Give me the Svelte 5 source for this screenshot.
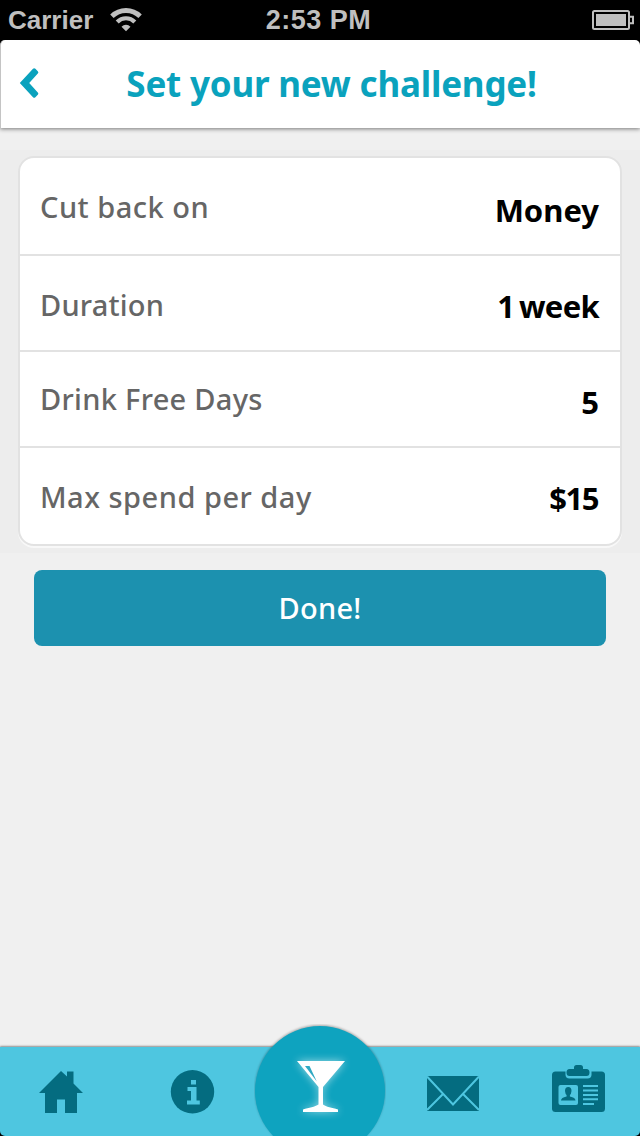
<script lang="ts">
  /** Challenge setup screen: a settings card, a confirm button and the tab bar. */
  type Row = { id: string; label: string; value: string };

  const rows: Row[] = [
    { id: 'goal', label: 'Cut back on', value: 'Money' },
    { id: 'duration', label: 'Duration', value: '1 week' },
    { id: 'free', label: 'Drink Free Days', value: '5' },
    { id: 'spend', label: 'Max spend per day', value: '$15' },
  ];
</script>

<div class="screen">
  <div class="status">
    <div class="carrier">
      <span>Carrier</span>
      <svg width="32" height="24" viewBox="0 0 32 24" fill="none" stroke="#bfbfbf">
        <path d="M1.900 8.300a20 20 0 0 1 28.200 0" stroke-width="4.800" />
        <path d="M7.200 13.900a12.400 12.400 0 0 1 17.600 0" stroke-width="4.200" />
        <path d="M16 23.200l-4.500-4.500a6.400 6.400 0 0 1 9 0z" fill="#bfbfbf" stroke="none" />
      </svg>
    </div>
    <span class="time">2:53 PM</span>
    <svg class="battery" width="42" height="20" viewBox="0 0 42 20">
      <rect x="1" y="1" width="36" height="18" rx="1.5" fill="none" stroke="#bfbfbf" stroke-width="2" />
      <rect x="4" y="4" width="30" height="12" fill="#bfbfbf" />
      <path d="M38 6.800h3v6.400h-3" fill="none" stroke="#bfbfbf" stroke-width="2" />
    </svg>
  </div>

  <header>
    <button class="back" aria-label="Back">
      <svg width="22" height="32" viewBox="0 0 22 32">
        <path d="M14 1.800q1.200-1.200 2.400 0l2.400 2.400q1.200 1.200 0 2.400L10.200 16l8.600 9.400q1.200 1.200 0 2.400l-2.400 2.400q-1.200 1.200-2.400 0L.8 16z" fill="#0aa2bd" />
      </svg>
    </button>
    <h1>Set your new challenge!</h1>
  </header>

  <main>
    <section>
      <div class="card">
        {#each rows as r (r.id)}
          <div class="row {r.id}">
            <span class="label">{r.label}</span>
            <span class="value">{r.value}</span>
          </div>
        {/each}
      </div>
    </section>
    <button class="done"><span>Done!</span></button>
  </main>

  <nav>
    <button aria-label="Home">
      <svg viewBox="0 0 128 89">
        <path d="M61 24l6 5.500V24.500h6.500v12L83 46h-6v20H65V52.500h-8V66H45V46h-6z" />
      </svg>
    </button>
    <button aria-label="Info">
      <svg viewBox="0 0 128 89">
        <circle cx="64.500" cy="44.800" r="21.700" />
        <path class="cut" d="M63 33h5v4.500h-5zM59.500 40h9v13.500h3.300V57.500H59v-4h4V44h-3.500z" />
      </svg>
    </button>
    <button class="drink" aria-label="Challenge">
      <svg viewBox="0 0 132 112">
        <circle cx="66" cy="67" r="65" fill="#0ea3bf" />
        <g class="glow">
          <path fill="#fff" d="M43 37h48L69 63v17.500c3 2.500 9 3 15 5V88H49v-2.500c6-2 12-2.500 15.500-5V63z" />
          <path fill="#2fa9c3" d="M51 42h4.500l7.300 15.500z" />
        </g>
      </svg>
    </button>
    <button aria-label="Messages">
      <svg viewBox="0 0 128 89">
        <rect x="43" y="29" width="52" height="35" />
        <path d="M43 29.500L69 57.500l26-28M43 63l15.500-15.500M95 63L79.500 47.500" fill="none" stroke="#4ec6e0" stroke-width="2" />
      </svg>
    </button>
    <button aria-label="Profile">
      <svg viewBox="0 0 128 89">
        <rect x="40" y="24.500" width="53" height="40.500" rx="3.500" />
        <rect class="cut" x="53.500" y="20" width="26" height="11.500" rx="4" />
        <path d="M57.500 22h4.500v-1.500q0-2.500 2.500-2.500h4q2.500 0 2.500 2.500V22h3.500q3 0 3 3.500t-3 3.500h-17q-3 0-3-3.500t3-3.500z" />
        <rect class="cut" x="46.500" y="38" width="19.500" height="20" rx="2" />
        <path d="M56.300 40q3.200 0 3.200 4-.3 3-1.600 4v1.500q5.600 1 5.600 4H49q0-3 5.600-4V48q-1.300-1-1.600-4 0-4 3.300-4z" />
        <path class="cut" d="M71 38h15v2H71zM71 42.500h15v2H71zM71 47h15v2H71zM71 51.300h15v2H71zM71 56h11v2H71z" />
      </svg>
    </button>
  </nav>
</div>

<style>
  :global(body) { background: #000; }
  .screen {
    width: 640px; height: 1136px;
    display: flex; flex-direction: column;
    overflow: hidden; background: #000;
    font-family: "Noto Sans", sans-serif;
  }
  button { padding: 0; border: 0; background: none; font: inherit; }
  svg { display: block; }

  .status {
    flex: none; height: 40px; box-sizing: border-box; padding: 0 6px 1px 8px;
    display: grid; grid-template-columns: 1fr auto 1fr; align-items: center;
    color: #bfbfbf; font: bold 26px "Liberation Sans", sans-serif;
  }
  .carrier { display: flex; align-items: center; gap: 17px; padding-top: 1px; }
  .time { font-size: 27px; letter-spacing: .5px; padding: 1px 5px 0 0; }
  .battery { justify-self: end; }

  header {
    flex: none; height: 88px; box-sizing: border-box;
    display: flex; align-items: center;
    background: #fff; border-left: 1px solid #c4c4c4;
    border-radius: 5px 5px 0 0;
    box-shadow: 0 1px 4px rgba(0, 0, 0, .5);
    z-index: 1;
  }
  .back { flex: none; width: 60px; padding: 0 0 2px 18px; }
  h1 {
    margin: 0; padding-right: 38px; flex: 1; text-align: center;
    color: #0aa2bd; font-size: 35px; font-weight: 700; line-height: 88px;
    letter-spacing: -.2px; white-space: nowrap;
  }

  main { flex: 1; background: #f0f0f0; padding-top: 22px; }
  section { background: #ededed; padding: 6px 18px 7px; }
  .card {
    background: #fff; border: 2px solid #e2e2e2; border-radius: 16px;
    box-shadow: 0 2px 0 #f8f8f8;
  }
  .row {
    height: 96px; box-sizing: border-box; padding: 0 21px 0 20px;
    display: flex; justify-content: space-between; align-items: flex-start;
    line-height: 96px; border-bottom: 2px solid #e2e2e2;
  }
  .row:first-child { height: 98px; }
  .row:last-child { border-bottom: 0; }
  .label { color: #666; font-size: 29px; font-weight: 500; letter-spacing: .5px; padding-top: 1px; }
  .value { color: #000; font-size: 31px; font-weight: 700; padding-top: 2px; }
  .goal .value { padding-top: 4px; }
  .duration .label { letter-spacing: .2px; }
  .duration .value { letter-spacing: -.7px; word-spacing: -2.5px; }
  .free .label { margin-top: -2px; letter-spacing: .3px; }
  .spend .value { letter-spacing: -1.5px; padding-right: 1px; }

  .done {
    display: block; width: 572px; height: 76px; margin: 17px auto 0;
    border-radius: 8px; background: #1c91af; color: #fff;
    font-size: 29px; font-weight: 500; line-height: 76px; letter-spacing: .3px;
  }

  nav {
    flex: none; height: 89px; display: flex; align-items: flex-end;
    background: #4ec6e0; border-radius: 0 0 5px 5px;
    box-shadow: 0 -1px 2px rgba(0, 0, 0, .4);
    z-index: 1;
  }
  nav button { width: 128px; height: 89px; flex: none; }
  nav svg { width: 100%; height: 100%; fill: #046c80; }
  nav .cut { fill: #4ec6e0; }
  /* the round tab rises above the bar */
  nav .drink { width: 132px; height: 112px; margin: 0 -2px; }
  .drink circle { filter: drop-shadow(0 -1px 1px rgba(0, 0, 0, .3)); }
  .glow { filter: drop-shadow(0 0 4px rgba(255, 255, 255, .6)); }
</style>
